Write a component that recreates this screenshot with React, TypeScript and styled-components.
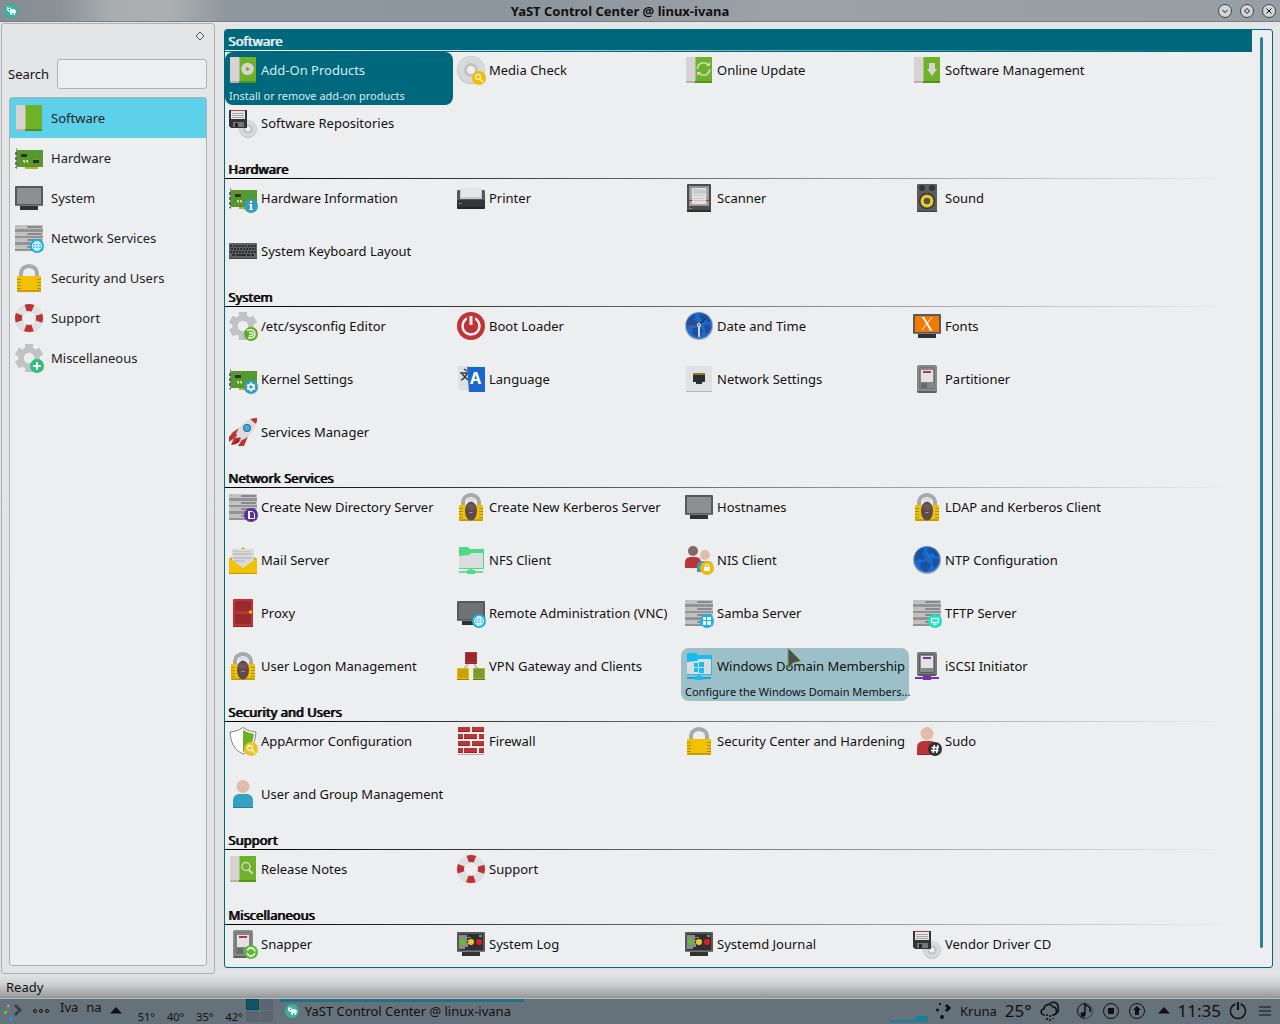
import React from "react";
import styled, { createGlobalStyle, css } from "styled-components";

const GlobalStyle = createGlobalStyle`
  *, *::before, *::after { box-sizing: border-box; }
  body {
    margin: 0;
    background: #e4e5e7;
    color: #111;
    font: 13px/18px "Noto Sans", "Open Sans", sans-serif;
  }
  button, input { font: inherit; color: inherit; }
  h1, h2, p { margin: 0; font-size: inherit; }
`;

/* ---------- icons, all drawn on a 28 x 28 grid ---------- */

const Glyph = styled.svg`
  display: block;
  flex: none;
  overflow: visible;
`;

const Book = () => (
  <>
    <path fill="#d9d2d2" d="M1 1h10v24H1z" />
    <path fill="#beb0b1" d="M1 25h10v2H1z" />
    <path fill="#6eb327" d="M10 1h17v24H10z" />
    <path fill="#9cc873" d="M10 1h1v24h-1z" />
    <path fill="#558f1b" d="M10 25h17v2H10z" />
  </>
);

const Board = () => (
  <>
    <path stroke="#8f9396" strokeWidth="1" d="M1.500 4v21" />
    <path stroke="#444d63" strokeWidth="1.500" strokeDasharray="3 2" d="M1 8v16" />
    <path fill="#55992c" d="M2 6h26v17H2z" />
    <path fill="#b5ad36" d="M10 23h13v2H10z" />
    <path fill="#6b8a22" d="M10 22h13v1H10z" />
    <path fill="#2d332b" d="M6 10h6v3H6zM18 16h6v3h-6z" />
    <path fill="#7c902a" d="M6 9h6v1H6zM18 15h6v1h-6z" />
    <path fill="#e2cfa2" d="M8 16h2v2H8zM11 16h2v2h-2zM9 18h1v1H9zM12 18h1v1h-1z" />
    <path fill="#2c9bb0" d="M20 8h3l-1 3z" />
  </>
);

const Screen = ({ fill = "#8e8f91" }: { fill?: string }) => (
  <>
    <path fill="#303133" d="M5 22h18v4H5z" />
    <rect x="0" y="2" width="28" height="20" rx="1" fill="#58595b" />
    <path fill={fill} d="M2 4h24v16H2z" />
    <path fill="#77797b" d="M0 21h28v1H0z" />
  </>
);

const Rack = () => (
  <>
    <path fill="#929395" d="M0 1h28v26H0z" />
    {[1, 8, 14, 21].map((y) => (
      <g key={y}>
        <path fill="#c1c2c4" d={`M0 ${y}h28v4H0z`} />
        <rect x="12" y={y + 1} width="15" height="2" rx="1" fill="#88898b" />
        <path fill="#d49a94" d={`M2 ${y + 1}h1v1h-1z`} />
        <path fill="#c9bb5d" d={`M4 ${y + 1}h1v1h-1z`} />
      </g>
    ))}
  </>
);

const Padlock = () => (
  <>
    <path fill="none" stroke="#a8a9ab" strokeWidth="4" d="M6 14V9a8 7 0 0 1 16 0v5" />
    <path fill="#f2c100" d="M2 12h24v15a1 1 0 0 1-1 1H3a1 1 0 0 1-1-1z" />
    <path fill="#a98d12" d="M2 15h4v1H2zM22 15h4v1h-4zM2 18h4v1H2zM22 18h4v1h-4zM2 21h4v1H2zM22 21h4v1h-4zM2 24h4v1H2zM22 24h4v1h-4z" />
    <path fill="#c79d06" d="M2 26h24v1l-1 1H3l-1-1z" />
  </>
);

const KerberosLock = () => (
  <>
    <Padlock />
    <ellipse cx="14" cy="18" rx="6" ry="9.500" fill="#5d4b4e" />
    <path fill="#dcdddf" d="M9 10c0-7 10-7 10 0-2-3-8-3-10 0z" />
    <ellipse cx="14" cy="14" rx="4" ry="3" fill="#6c595b" />
    <path stroke="#a9999b" strokeWidth="1" d="M12.500 19.500h3" />
  </>
);

const Cog = () => (
  <g stroke="#c1c2c4" fill="none">
    <circle cx="14" cy="14" r="8" strokeWidth="5.500" />
    {[0, 60, 120, 180, 240, 300].map((a) => (
      <path key={a} strokeWidth="8" d="M14 0v6" transform={`rotate(${a} 14 14)`} />
    ))}
  </g>
);

const Lifebuoy = () => (
  <g fill="none" strokeWidth="7">
    <circle cx="14" cy="14.500" r="10.500" stroke="#cbccce" />
    <circle cx="14" cy="14" r="10.500" stroke="#dfe0e2" />
    <circle cx="14" cy="14" r="10.500" stroke="#be3436" strokeDasharray="7.400 9.093" strokeDashoffset="3.700" />
  </g>
);

const Disc = ({ cx = 14, cy = 14, r = 14 }: { cx?: number; cy?: number; r?: number }) => (
  <>
    <circle cx={cx} cy={cy} r={r} fill="#bfc0c2" />
    <circle cx={cx} cy={cy - 0.5} r={r - 0.5} fill="#d8d9db" />
    <circle cx={cx} cy={cy} r={r * 0.5} fill="#c0c1c3" />
    <circle cx={cx} cy={cy} r={r * 0.28} fill="#eeeff1" />
  </>
);

const Floppy = () => (
  <>
    <Disc cx={19} cy={20} r={9} />
    <path fill="#333436" d="M0 1h18v18H2l-2-2z" />
    <path fill="#c5383a" d="M2 1h14v1H2z" />
    <path fill="#e8e8ea" d="M2 2h14v8H2z" />
    <path fill="#a4a5a7" d="M3 4h12v1H3zM3 6h12v1H3zM3 8h12v1H3z" />
    <path fill="#747577" d="M4 13h11v5H4z" />
    <path fill="#28292b" d="M6 14h3v4H6z" />
  </>
);

const Globe = () => (
  <>
    <circle cx="14" cy="14" r="14" fill="#a3a7ad" />
    <circle cx="14" cy="13.500" r="13" fill="#1b6ad0" />
    <path fill="#1d519c" d="M4 6l5-4 2 2-2 4 4 2-2 4-5-1-4 2 0-5zM15 2l6 1 5 6-3 2-3-4-4 1-2-4zM8 16l5-1 5 3-2 5-3 3-6-5zM19 13l5-1 2 4-4 6-2-3z" />
  </>
);

const Drive = () => (
  <>
    <rect x="4" y="0" width="20" height="28" rx="2" fill="#88898b" />
    <path fill="#5f6062" d="M4 26h20a2 2 0 0 1-2 2H6a2 2 0 0 1-2-2z" />
    <rect x="6.500" y="2.500" width="15" height="21" rx="1.500" fill="#858688" stroke="#727375" />
    <path fill="#e2e2e4" d="M8 5h12v12H8z" />
    <path fill="#bd3538" d="M10 6h8v2h-8z" />
    <path fill="#6a6b6d" d="M8 18h6v5H8z" />
  </>
);

const Person = ({ shirt, shade }: { shirt: string; shade: string }) => (
  <>
    <circle cx="14" cy="6.500" r="6.500" fill="#dfbda8" />
    <path fill={shirt} d="M4 28v-7c0-5 3-7 7-7h6c4 0 7 2 7 7v7z" />
    <path fill={shade} d="M4 27h20v1H4z" />
  </>
);

const NetFolder = ({ hue, shade }: { hue: string; shade: string }) => (
  <>
    <path fill={hue} d="M2 1h9l2 2h14v7H2z" />
    <path fill="#dbdcde" d="M2 10l10-1 2-2h12v15H2z" />
    <path fill={hue} d="M2 22h25v1H2zM26 6h1v17h-1z" />
    <path fill={shade} d="M2 25h24v2H2z" />
    <path fill={hue} d="M13 23h2v1h3v4h-8v-4h3z" />
  </>
);

const LogScreen = () => (
  <>
    <Screen fill="#2e3032" />
    <path fill="#8a8b8d" d="M2 5h8v2H2zM2 7h12v1H2zM2 8h8v2H2zM2 10h15v1H2zM2 11h8v2H2zM2 13h14v1H2zM2 14h9v3H2zM2 17h6v2H2z" />
    <path fill="#6f9a5c" d="M22 5h3v2h-3z" />
    <circle cx="5.500" cy="12" r="3" fill="#67bb36" />
    <circle cx="14" cy="12" r="3" fill="#ecc52b" />
    <circle cx="22" cy="12" r="3" fill="#de1c24" />
  </>
);

const Badge = ({ fill, children }: { fill: string; children?: React.ReactNode }) => (
  <>
    <circle cx="22" cy="22" r="7" fill={fill} />
    {children}
  </>
);

const LensBadge = ({ fill = "#f3bd05" }: { fill?: string }) => (
  <Badge fill={fill}>
    <circle cx="21" cy="21" r="2.500" fill="none" stroke="#fff3cf" strokeWidth="1.300" />
    <path stroke="#fff3cf" strokeWidth="1.500" d="M23 23l3 3" />
  </Badge>
);

const WebBadge = () => (
  <Badge fill="#16b4e2">
    <g fill="none" stroke="#fff">
      <circle cx="22" cy="22" r="4.500" />
      <ellipse cx="22" cy="22" rx="2" ry="4.500" />
      <path d="M17.500 22h9M22 17.500v9M18.500 19.500h7M18.500 24.500h7" strokeWidth=".7" />
    </g>
  </Badge>
);

const Brick = ({ x, y, w, c, s }: { x: number; y: number; w: number; c: string; s: string }) => (
  <>
    <path fill={s} d={`M${x} ${y}h${w}v12h-${w}z`} />
    <path fill={c} d={`M${x + 1} ${y + 1}h${w - 2}v9h-${w - 2}z`} />
  </>
);

const drawings = {
  software: <Book />,
  hardware: <Board />,
  system: <Screen />,
  network: <><Rack /><WebBadge /></>,
  lock: <Padlock />,
  support: <Lifebuoy />,
  misc: (
    <>
      <Cog />
      <Badge fill="#2dc079"><path stroke="#fff" strokeWidth="2" d="M22 18v8M18 22h8" /></Badge>
    </>
  ),
  addon: (
    <>
      <Book />
      <circle cx="18.500" cy="13" r="4" fill="none" stroke="#d9d2d2" strokeWidth="4.500" />
    </>
  ),
  media: <><Disc /><LensBadge /></>,
  update: (
    <>
      <Book />
      <g fill="none" stroke="#d9d2d2" strokeWidth="1.600">
        <path d="M12.500 13a6 6 0 0 1 11-3.500M24.500 13a6 6 0 0 1-11 3.500" />
      </g>
      <path fill="#d9d2d2" d="M21 10h4V6zM16 16h-4v4z" />
    </>
  ),
  install: <><Book /><path fill="#d9d2d2" d="M16 7h6v6h2l-5 7-5-7h2z" /></>,
  floppy: <Floppy />,
  hwinfo: (
    <>
      <Board />
      <Badge fill="#359dbe">
        <path fill="#fff" d="M21 17h2v2h-2zM20 20h3v5h1v1h-4v-1h1v-4h-1z" />
      </Badge>
    </>
  ),
  printer: (
    <>
      <path fill="#55575a" d="M0 7l1-1h26l1 1v17l-1 1H1l-1-1z" />
      <path fill="#333538" d="M0 16h28v8l-1 1H1l-1-1z" />
      <path fill="#232426" d="M0 23h28v1l-1 1H1z" />
      <path fill="#c9cacc" d="M3 5h22v10H3z" />
      <path fill="#e5e6e8" d="M4 3h20v10H4z" />
      <path fill="#988744" d="M2 19h3v1H2z" />
    </>
  ),
  scanner: (
    <>
      <rect x="2" y="0" width="24" height="28" rx="1" fill="#4b4c4e" />
      <path fill="#303133" d="M2 26h24v2H2z" />
      <path fill="#929395" d="M4 2h20v20H4z" />
      <path fill="#a6a7a9" d="M5 4h18v17H5z" />
      <path fill="#dfe0e2" d="M7 4h14v16H7z" />
      <path fill="#c9cacc" d="M8 5h10v1h3v4H8zM8 11h11v1h-11zM8 14h11v1H8z" />
      <path fill="#e9b0b0" d="M7 16h14v1H7z" />
      <path fill="#c9282c" d="M4 16h3v1H4zM21 16h3v1h-3z" />
      <path fill="#9a9123" d="M4 24h3v1H4z" />
    </>
  ),
  sound: (
    <>
      <rect x="4" y="0" width="20" height="28" rx="1" fill="#5b5c5e" />
      <path fill="#3d3e40" d="M4 27h20v1H4z" />
      <circle cx="9" cy="4" r="3" fill="#333436" />
      <circle cx="19" cy="4" r="3" fill="#333436" />
      <circle cx="14" cy="17" r="8" fill="#303133" />
      <circle cx="14" cy="17" r="4.800" fill="none" stroke="#e8c52a" strokeWidth="3.500" />
      <circle cx="14" cy="17" r="2.500" fill="#55565a" />
    </>
  ),
  keyboard: (
    <>
      <rect x="0" y="6" width="28" height="16" rx="1" fill="#5f6164" />
      <path fill="#434548" d="M0 21h28v1H0z" />
      <g stroke="#2c2e31" strokeWidth="2">
        <path strokeDasharray="2 1" d="M1 9h26M2 12h25M1 15h26" />
        <path strokeDasharray="3 1 10 1 3 1 3" d="M3 18h22" />
      </g>
    </>
  ),
  sysconfig: (
    <>
      <Cog />
      <Badge fill="#5cad2a">
        <path fill="none" stroke="#e8f4dd" strokeWidth="1.500" d="M18 18.500c5-2 8 0 8 3.500s-4 5-7 3.500M20 21c3-1 4 0 4 1s-2 2-4 1.500" />
      </Badge>
    </>
  ),
  boot: (
    <>
      <circle cx="14" cy="14" r="14" fill="#bf3436" />
      <circle cx="14" cy="14" r="8.500" fill="none" stroke="#f0f0f2" strokeWidth="2.500" />
      <path fill="#bf3436" d="M10 3h8v8h-8z" />
      <path fill="#f0f0f2" d="M12.500 4h3v9h-3z" />
    </>
  ),
  clock: (
    <>
      <Globe />
      <path stroke="#b42d40" strokeWidth="1" d="M3 13.500h10" />
      <path stroke="#22242a" strokeWidth="1.500" d="M14 13l6-6" />
      <path stroke="#c8d4e4" strokeWidth="2" d="M14 14v11" />
      <circle cx="14" cy="13" r="2" fill="#eee" />
      <circle cx="14" cy="13" r="1" fill="#555" />
    </>
  ),
  fonts: (
    <>
      <Screen fill="#f57900" />
      <path stroke="#fff" strokeWidth="2" d="M10 5l8 13" />
      <path stroke="#fff" strokeWidth="1" d="M19 5L9 18M8.500 5.500h3M16.500 18h3" />
    </>
  ),
  kernel: (
    <>
      <Board />
      <Badge fill="#359dbe">
        <circle cx="22" cy="22" r="2.700" fill="none" stroke="#fff" strokeWidth="1.800" />
        <path stroke="#fff" strokeWidth="1.800" d="M22 17.500v2M22 24.500v2M18 20l2 1M24 23l2 1M26 20l-2 1M20 23l-2 1" />
      </Badge>
    </>
  ),
  language: (
    <>
      <path fill="#dedfe1" d="M1 1h17l2 24H1z" />
      <path fill="none" stroke="#3a3b3d" strokeWidth="1.500" d="M7 4l3 2M3 8h8M10 8c-1 3-3 6-6 7M5 9l6 6" />
      <path fill="#1a68cf" d="M10 2h18v25H12z" />
      <text x="13" y="19" fill="#fff" fontFamily="Noto Sans, sans-serif" fontWeight="700" fontSize="16">A</text>
    </>
  ),
  port: (
    <>
      <rect x="1" y="1" width="26" height="26" rx="1" fill="#e0e1e3" />
      <path fill="#b4b5b7" d="M1 26h26v1H1z" />
      <path fill="#2d2e30" d="M8 8h12v9h-3v2h-6v-2H8z" />
      <path fill="#8c7b1e" d="M8 8h12v2H8z" />
    </>
  ),
  drive: <Drive />,
  rocket: (
    <>
      <path fill="#be3436" d="M10 10l-6 4-4 5v5l8-6zM19 18l-4 10H9l5-8zM2 27l3-7 8-1-4 6z" />
      <path fill="#8f2a2c" d="M2 27l7-6 2 2-4 3z" />
      <path fill="#dcdde0" d="M28 0c-1 9-5 17-14 22l-7-6C10 8 17 1 28 0z" />
      <path fill="#be3436" d="M28 0c0 2 0 4-1 6l-6-5c2 0 5-1 7-1z" />
      <circle cx="18" cy="10" r="4" fill="#55606a" />
      <circle cx="18" cy="10" r="3" fill="#1cb9ee" />
    </>
  ),
  directory: (
    <>
      <Rack />
      <Badge fill="#5b2da0">
        <path fill="none" stroke="#fff" d="M20.500 18.500h3l2 2v5h-5z" />
        <path fill="#fff" d="M19 18h2v8h-2z" />
      </Badge>
    </>
  ),
  kerberos: <KerberosLock />,
  mail: (
    <>
      <path fill="#d0a400" d="M12 3l2-2 2 2zM0 13l3-2h22l3 2v14H0z" />
      <path fill="#d9dadc" d="M3 3h22v14l-11 8-11-8z" />
      <path fill="#c3c4c6" d="M4 5h17v1H4zM4 7h19v2H4zM4 11h19v2H4zM4 14h12v2H4z" />
      <path fill="#f2c100" d="M0 12l14 10 14-10v15H0z" />
      <path fill="#c49a05" d="M0 27h28v1H0z" />
    </>
  ),
  nfs: <NetFolder hue="#4bdb83" shade="#74d69b" />,
  nis: (
    <>
      <circle cx="8" cy="5" r="5" fill="#87666a" />
      <path fill="#be3436" d="M0 22v-5c0-4 2-6 6-6h4c4 0 6 2 6 6v5z" />
      <circle cx="20" cy="9" r="5" fill="#dfbda8" />
      <path fill="#359dbe" d="M12 26v-5c0-4 2-6 6-6h4c4 0 6 2 6 6v5z" />
      <Badge fill="#f2b90a">
        <path fill="none" stroke="#fff" d="M20.500 21v-2.500h3V21" />
        <path fill="#fff" d="M19 21h6v4h-6z" />
      </Badge>
    </>
  ),
  globe: <Globe />,
  door: (
    <>
      <rect x="4" y="0" width="20" height="28" rx="1" fill="#be3436" />
      <path fill="#8f2628" d="M4 27h20v1H4z" />
      <path fill="#982a2c" d="M6 2h16v10H6zM6 15h16v10H6z" />
      <circle cx="21.500" cy="13" r="1.700" fill="#f2c100" />
    </>
  ),
  vnc: <><Screen fill="#707173" /><WebBadge /></>,
  samba: (
    <>
      <Rack />
      <Badge fill="#16b4ef">
        <path fill="#fff" d="M18 18h3v3h-3zM22 18h4v3h-4zM18 22h3v4h-3zM22 22h4v4h-4z" />
      </Badge>
    </>
  ),
  tftp: (
    <>
      <Rack />
      <Badge fill="#0ee6bd">
        <path fill="none" stroke="#fff" strokeWidth="1.300" d="M18.500 19.500h7v4h-7zM20.500 25.500h3" />
      </Badge>
    </>
  ),
  vpn: (
    <>
      <path stroke="#b8b9bb" strokeWidth="2" d="M11 12l-4 5M17 12l4 5" />
      <Brick x={8} y={0} w={12} c="#98292b" s="#be3436" />
      <Brick x={0} y={16} w={12} c="#caa307" s="#ecbd04" />
      <Brick x={16} y={16} w={12} c="#7f9a29" s="#9cb832" />
      <path fill="#8f2628" d="M8 11h12v1H8z" />
      <path fill="#9d7d05" d="M0 27h12v1H0z" />
      <path fill="#62781e" d="M16 27h12v1H16z" />
    </>
  ),
  domain: (
    <>
      <NetFolder hue="#17bcf0" shade="#2a9fcb" />
      <path fill="#17bcf0" d="M9 11h4v4H9zM14 10h5v5h-5zM9 16h4v4H9zM14 16h5v5h-5z" />
    </>
  ),
  iscsi: (
    <>
      <rect x="4" y="0" width="20" height="24" rx="2" fill="#78797b" />
      <path fill="#58595b" d="M4 22h20l-2 2H6z" />
      <rect x="6.500" y="2.500" width="15" height="18" rx="1.500" fill="#88898b" stroke="#5c5d5f" />
      <path fill="#e2e2e4" d="M8 4h12v12H8z" />
      <path fill="#6b35b5" d="M10 5h8v2h-8zM2 25h24v2H2zM10 24h8v4h-8z" />
    </>
  ),
  apparmor: (
    <>
      <path fill="#fff" stroke="#808183" d="M14 .500c4 3 8 4 13 4.500-1 11-4 18-13 22C5 23 2 16 1 5 6 4.500 10 3.500 14 .500z" />
      <path fill="#6cb024" d="M14 3c3 2 7 3 11 4-1 8-4 15-11 18z" />
      <LensBadge fill="#e8c52a" />
    </>
  ),
  firewall: (
    <>
      <path fill="#be3436" d="M1 0h12v4H1zM15 0h12v4H15zM1 7h5v4H1zM7 7h13v4H7zM22 7h5v4h-5zM1 14h12v4H1zM15 14h12v4H15zM1 21h5v4H1zM7 21h13v4H7zM22 21h5v4h-5z" />
      <path fill="#8f2628" d="M1 4h12v1H1zM15 4h12v1H15zM1 11h5v1H1zM7 11h13v1H7zM22 11h5v1h-5zM1 18h12v1H1zM15 18h12v1H15zM1 25h5v1H1zM7 25h13v1H7zM22 25h5v1h-5z" />
      <path fill="#c9a3a5" d="M1 27h26v1H1z" />
    </>
  ),
  sudo: (
    <>
      <Person shirt="#be3436" shade="#8f2628" />
      <Badge fill="#303032">
        <path stroke="#fff" strokeWidth="1.500" d="M21.500 18l-1.500 8M25 18l-1.500 8M18.500 20.500h7.500M18 23.500h7.500" />
      </Badge>
    </>
  ),
  user: <Person shirt="#35a0c2" shade="#28809c" />,
  notes: (
    <>
      <Book />
      <circle cx="17" cy="11.500" r="4" fill="none" stroke="#d9d2d2" strokeWidth="1.500" />
      <path stroke="#d9d2d2" strokeWidth="2" d="M19.500 14.500l4 4" />
    </>
  ),
  snapper: (
    <>
      <Drive />
      <Badge fill="#5fb836">
        <circle cx="22" cy="22" r="4" fill="none" stroke="#fff" strokeWidth="1.500" strokeDasharray="10 2.500" transform="rotate(20 22 22)" />
      </Badge>
    </>
  ),
  log: <LogScreen />,
};

type IconName = keyof typeof drawings;

const Icon = ({ name }: { name: IconName }) => (
  <Glyph width="28" height="28" viewBox="0 0 28 28" aria-hidden="true">
    {drawings[name]}
  </Glyph>
);

/* ---------- window frame ---------- */

const Desktop = styled.div`
  display: flex;
  flex-direction: column;
  height: 100vh;
`;

const TitleBar = styled.header`
  display: flex;
  align-items: center;
  flex: none;
  height: 22px;
  padding: 0 4px;
  border-bottom: 1px solid #787e84;
  background: linear-gradient(90deg, #858d94 0, #8a9298 60px, #a9adb0 110px, #abafb1 170px, #8f979e 225px, #8d969d 42%, #9ba2a7 60%, #989fa4 100%);
`;

const TitleIcon = styled.div`
  width: 18px;
`;

const Title = styled.h1`
  flex: 1;
  text-align: center;
  font-weight: 700;
  line-height: 20px;
`;

const WindowButtons = styled.div`
  display: flex;
  gap: 8px;
`;

const WindowButton = styled.button`
  display: grid;
  place-items: center;
  width: 14px;
  height: 14px;
  padding: 0;
  border: 1px solid #3e4347;
  border-radius: 50%;
  background: #d3d6d8;
`;

const Work = styled.main`
  flex: 1;
  min-height: 0;
  display: flex;
  flex-direction: column;
  background: linear-gradient(180deg, #e4e5e7 0, #e2e3e5 calc(100% - 24px), #cfd0d1 calc(100% - 14px), #a2a3a4 calc(100% - 3px), #929494 100%);
`;

const Panels = styled.div`
  flex: 1;
  min-height: 0;
  display: flex;
  padding: 1px 7px 0 1px;
  gap: 9px;
`;

const Side = styled.aside`
  flex: none;
  width: 214px;
  display: flex;
  flex-direction: column;
  padding: 5px 7px 7px;
  border: 1px solid #aeb0b2;
  border-radius: 3px;
`;

const FloatButton = styled.button`
  align-self: flex-end;
  width: 14px;
  height: 14px;
  padding: 0;
  border: 0;
  background: none;
`;

const SearchRow = styled.div`
  display: flex;
  align-items: center;
  gap: 8px;
  margin: 16px 0 8px;

  label { margin-left: -1px; }

  input {
    flex: 1;
    min-width: 0;
    height: 30px;
    padding: 0 6px;
    border: 1px solid #aeb0b2;
    border-radius: 3px;
    background: #edeef0;
    outline: none;
  }
`;

const Groups = styled.nav`
  flex: 1;
  border: 1px solid #aeb0b2;
  border-radius: 3px;
  background: #edeef0;
`;

const Group = styled.button<{ $active?: boolean }>`
  display: flex;
  align-items: center;
  gap: 8px;
  width: 100%;
  height: 40px;
  padding: 0 5px;
  border: 0;
  background: ${(p) => (p.$active ? "#5dd1ea" : "transparent")};
  color: #222;
  text-align: left;
`;

const Main = styled.div`
  flex: 1;
  min-width: 0;
  display: flex;
  margin: 6px 0;
  border: 1px solid #00687c;
  border-radius: 3px;
  background: #edeef0;
  overflow: hidden;
`;

const Sections = styled.div`
  flex: 1;
  min-width: 0;
`;

const Gutter = styled.div`
  flex: none;
  width: 20px;
  padding: 7px 8px 19px;

  &::before {
    content: "";
    display: block;
    width: 3px;
    height: 100%;
    border-radius: 2px;
    background: #2b8498;
  }
`;

const Heading = styled.h2<{ $active?: boolean }>`
  height: 22px;
  padding: 2px 3px 0;
  font-weight: 400;
  color: #000;
  text-shadow: 1px 0 currentColor;
  background: linear-gradient(90deg, #000, #0000 98%) 0 20px / 100% 1px no-repeat;
  ${(p) =>
    p.$active &&
    css`
      color: #e6f0f2;
      background: linear-gradient(90deg, #fff, #fff0 98%) 0 20px / 100% 1px no-repeat #00687c;
    `}
`;

const Tiles = styled.div`
  display: grid;
  grid-template-columns: repeat(auto-fill, 228px);
`;

const Tile = styled.button<{ $state?: "selected" | "hover" }>`
  position: relative;
  display: flex;
  flex-direction: column;
  justify-content: flex-start;
  align-items: flex-start;
  height: 53px;
  padding: 4px 0 0 4px;
  border: 0;
  border-radius: 8px;
  background: none;
  text-align: left;
  white-space: nowrap;
  ${(p) => p.$state === "selected" && css`background: #00687c; color: #d8eaee;`}
  ${(p) => p.$state === "hover" && css`background: #9bc0c8;`}
`;

const TileTop = styled.span`
  display: flex;
  align-items: center;
  gap: 4px;
  height: 28px;
`;

const Hint = styled.span`
  font-size: 11px;
  line-height: 24px;
`;

const Pointer = styled.svg`
  position: absolute;
  top: -1px;
  left: 106px;
`;

const Status = styled.footer`
  flex: none;
  height: 24px;
  padding: 4px 6px;
`;

/* ---------- desktop taskbar ---------- */

const Bar = styled.footer`
  flex: none;
  display: flex;
  align-items: center;
  height: 26px;
  border-top: 1px solid #b4b9bc;
  background: #65727b;
  white-space: nowrap;
  padding: 0 9px 2px 3px;
`;

const User = styled.span`
  display: flex;
  gap: 8px;
  margin: 0 8px 8px 11px;
`;

const Temps = styled.span`
  display: flex;
  gap: 12px;
  margin: 12px 3px 0 16px;
  font-size: 11px;
  line-height: 16px;
`;

const Pager = styled.div`
  display: grid;
  grid-template: repeat(2, 11px) / repeat(2, 13px);
  gap: 1px;
  align-self: flex-start;

  i { background: #5a666f; }
  i:first-child { background: #0f5666; border: 1px solid #0a4552; }
`;

const Task = styled.button`
  display: flex;
  align-items: center;
  gap: 6px;
  align-self: stretch;
  width: 244px;
  margin-left: 7px;
  padding: 0 5px 2px;
  border: 0;
  border-top: 3px solid #207083;
  background: none;
`;

const Tray = styled.div`
  display: flex;
  align-items: center;
  gap: 8px;
  margin-left: auto;
`;

const Big = styled.span`
  font-size: 17px;
  line-height: 24px;
`;

const TrayButton = styled.button<{ $space?: number }>`
  display: block;
  padding: 0;
  border: 0;
  margin: 0 0 0 ${(p) => p.$space ?? 0}px;
  background: none;
`;

const Line = styled.svg.attrs({ fill: "none" })`
  display: block;
  overflow: visible;
  stroke: #111;
`;

const YastMark = () => (
  <Glyph width="14" height="14" viewBox="0 0 14 14" aria-hidden="true">
    <circle cx="7" cy="7" r="7" fill="#35b2a2" />
    <path fill="#f2f5f5" d="M3 2.500l2 2 1-2 1 2.500h3l2 1.500v3l-1-1v2.500h-1.500V9H8v2H6.500L6 8 4 7.500 3 6z" />
    <path fill="#2d4a4a" d="M5 5h1v1H5z" />
  </Glyph>
);

const Caret = () => (
  <Line width="12" height="7" viewBox="0 0 12 7"><path fill="#111" stroke="none" d="M0 6.500L6 0l6 6.500z" /></Line>
);

/* ---------- data ---------- */

const groups: [IconName, string][] = [
  ["software", "Software"],
  ["hardware", "Hardware"],
  ["system", "System"],
  ["network", "Network Services"],
  ["lock", "Security and Users"],
  ["support", "Support"],
  ["misc", "Miscellaneous"],
];

type Entry = { icon: IconName; name: string; hint?: string; state?: "selected" | "hover" };

const sections: { title: string; entries: Entry[] }[] = [
  {
    title: "Software",
    entries: [
      { icon: "addon", name: "Add-On Products", hint: "Install or remove add-on products", state: "selected" },
      { icon: "media", name: "Media Check" },
      { icon: "update", name: "Online Update" },
      { icon: "install", name: "Software Management" },
      { icon: "floppy", name: "Software Repositories" },
    ],
  },
  {
    title: "Hardware",
    entries: [
      { icon: "hwinfo", name: "Hardware Information" },
      { icon: "printer", name: "Printer" },
      { icon: "scanner", name: "Scanner" },
      { icon: "sound", name: "Sound" },
      { icon: "keyboard", name: "System Keyboard Layout" },
    ],
  },
  {
    title: "System",
    entries: [
      { icon: "sysconfig", name: "/etc/sysconfig Editor" },
      { icon: "boot", name: "Boot Loader" },
      { icon: "clock", name: "Date and Time" },
      { icon: "fonts", name: "Fonts" },
      { icon: "kernel", name: "Kernel Settings" },
      { icon: "language", name: "Language" },
      { icon: "port", name: "Network Settings" },
      { icon: "drive", name: "Partitioner" },
      { icon: "rocket", name: "Services Manager" },
    ],
  },
  {
    title: "Network Services",
    entries: [
      { icon: "directory", name: "Create New Directory Server" },
      { icon: "kerberos", name: "Create New Kerberos Server" },
      { icon: "system", name: "Hostnames" },
      { icon: "kerberos", name: "LDAP and Kerberos Client" },
      { icon: "mail", name: "Mail Server" },
      { icon: "nfs", name: "NFS Client" },
      { icon: "nis", name: "NIS Client" },
      { icon: "globe", name: "NTP Configuration" },
      { icon: "door", name: "Proxy" },
      { icon: "vnc", name: "Remote Administration (VNC)" },
      { icon: "samba", name: "Samba Server" },
      { icon: "tftp", name: "TFTP Server" },
      { icon: "kerberos", name: "User Logon Management" },
      { icon: "vpn", name: "VPN Gateway and Clients" },
      { icon: "domain", name: "Windows Domain Membership", hint: "Configure the Windows Domain Members...", state: "hover" },
      { icon: "iscsi", name: "iSCSI Initiator" },
    ],
  },
  {
    title: "Security and Users",
    entries: [
      { icon: "apparmor", name: "AppArmor Configuration" },
      { icon: "firewall", name: "Firewall" },
      { icon: "lock", name: "Security Center and Hardening" },
      { icon: "sudo", name: "Sudo" },
      { icon: "user", name: "User and Group Management" },
    ],
  },
  {
    title: "Support",
    entries: [
      { icon: "notes", name: "Release Notes" },
      { icon: "support", name: "Support" },
    ],
  },
  {
    title: "Miscellaneous",
    entries: [
      { icon: "snapper", name: "Snapper" },
      { icon: "log", name: "System Log" },
      { icon: "log", name: "Systemd Journal" },
      { icon: "floppy", name: "Vendor Driver CD" },
    ],
  },
];

const temperatures = ["51°", "40°", "35°", "42°"];

export default function App() {
  return (
    <Desktop>
      <GlobalStyle />
      <TitleBar>
        <TitleIcon><YastMark /></TitleIcon>
        <Title>YaST Control Center @ linux-ivana</Title>
        <WindowButtons>
          <WindowButton aria-label="Minimize">
            <Line width="8" height="8" viewBox="0 0 8 8"><path d="M1.500 3L4 5.500 6.500 3" /></Line>
          </WindowButton>
          <WindowButton aria-label="Maximize">
            <Line width="8" height="8" viewBox="0 0 8 8"><path d="M4 1.500L6.500 4 4 6.500 1.500 4z" /></Line>
          </WindowButton>
          <WindowButton aria-label="Close">
            <Line width="8" height="8" viewBox="0 0 8 8"><path d="M1.500 1.500l5 5M6.500 1.500l-5 5" /></Line>
          </WindowButton>
        </WindowButtons>
      </TitleBar>

      <Work>
        <Panels>
          <Side>
            <FloatButton aria-label="Detach panel">
              <Line width="14" height="14" viewBox="0 0 14 14">
                <path stroke="#55585b" d="M7 3l4 4-4 4-4-4z" />
              </Line>
            </FloatButton>
            <SearchRow>
              <label htmlFor="search">Search</label>
              <input id="search" type="text" />
            </SearchRow>
            <Groups>
              {groups.map(([icon, label], i) => (
                <Group key={label} $active={i === 0}>
                  <Icon name={icon} />
                  {label}
                </Group>
              ))}
            </Groups>
          </Side>

          <Main>
            <Sections>
              {sections.map((s, i) => (
                <section key={s.title}>
                  <Heading $active={i === 0}>{s.title}</Heading>
                  <Tiles>
                    {s.entries.map((e) => (
                      <Tile key={e.name} $state={e.state}>
                        <TileTop>
                          <Icon name={e.icon} />
                          {e.name}
                        </TileTop>
                        {e.hint && <Hint>{e.hint}</Hint>}
                        {e.state === "hover" && (
                          <Pointer width="16" height="24" viewBox="0 0 16 24" aria-hidden="true">
                            <path fill="#4b4f4c" stroke="#7fae62" d="M1 1v21l5-6 8-2z" />
                          </Pointer>
                        )}
                      </Tile>
                    ))}
                  </Tiles>
                </section>
              ))}
            </Sections>
            <Gutter />
          </Main>
        </Panels>
        <Status>Ready</Status>
      </Work>

      <Bar>
        <TrayButton aria-label="Application launcher">
          <Line width="20" height="20" viewBox="0 0 20 20">
            <path stroke="#3a4146" strokeWidth="3" d="M12 4l5 5-5 5" />
            <path fill="#e59a86" stroke="none" d="M5 3l2 3H4z" />
            <path fill="#68c21c" stroke="none" d="M1 10h3v3H1z" />
            <circle cx="8" cy="18" r="2" fill="#2490ff" stroke="none" />
          </Line>
        </TrayButton>
        <TrayButton aria-label="Activities" $space={10}>
          <Line width="16" height="6" viewBox="0 0 16 6">
            <circle cx="2" cy="3" r="1.500" /><circle cx="8" cy="3" r="1.500" /><circle cx="14" cy="3" r="1.500" />
          </Line>
        </TrayButton>
        <User><span>Iva</span><span>na</span></User>
        <Caret />
        <Temps>{temperatures.map((t) => <span key={t}>{t}</span>)}</Temps>
        <Pager><i /><i /><i /><i /></Pager>
        <Task><YastMark />YaST Control Center @ linux-ivana</Task>

        <Tray>
          <Line width="38" height="22" viewBox="0 0 38 22">
            <path fill="#1d7f93" stroke="none" d="M0 20h13v2H0zM13 20h12v2H13zM25 16h13v6H25z" />
          </Line>
          <Line width="16" height="16" viewBox="0 0 16 16">
            <path strokeWidth="3" d="M10 2l3 3-3 3" />
            <path fill="#111" stroke="none" d="M3 0h2v2H3z" />
            <circle cx="1.500" cy="7" r="1.500" fill="#111" stroke="none" />
            <circle cx="6" cy="14" r="2" fill="#111" stroke="none" />
          </Line>
          <span>Kruna</span>
          <Big>25°</Big>
          <Line width="20" height="20" viewBox="0 0 20 20">
            <path strokeWidth="1.600" d="M5 14c-5 0-5-6-1-6 0-5 7-6 9-2 4 0 5 6 1 8M9 3.500c3-4 10-2 9 3 1 3 1 5-3 6.500" />
            <path strokeWidth="1.600" strokeDasharray="2 2" d="M7 13v6M10 14v6M13 13v5" />
          </Line>
          <TrayButton aria-label="Media player" $space={8}>
            <Line width="18" height="18" viewBox="0 0 18 18">
              <path d="M9 1.500a7.500 7.500 0 0 0 0 15" />
              <path stroke="#38424a" d="M9 1.500a7.500 7.500 0 0 1 0 15" />
              <path strokeWidth="1.500" d="M9 12V2l5 4v4" />
              <circle cx="7" cy="12.500" r="2.500" fill="#111" stroke="none" />
            </Line>
          </TrayButton>
          <TrayButton aria-label="Stop">
            <Line width="18" height="18" viewBox="0 0 18 18">
              <circle cx="9" cy="9" r="7.500" /><path fill="#111" stroke="none" d="M6 6h6v6H6z" />
            </Line>
          </TrayButton>
          <TrayButton aria-label="Updates">
            <Line width="18" height="18" viewBox="0 0 18 18">
              <circle cx="9" cy="9" r="7.500" /><path fill="#111" stroke="none" d="M9 4l4 4h-2v5H7V8H5z" />
            </Line>
          </TrayButton>
          <TrayButton aria-label="Show hidden icons" $space={4}><Caret /></TrayButton>
          <Big>11:35</Big>
          <TrayButton aria-label="Shut down">
            <Line width="18" height="18" viewBox="0 0 18 18">
              <path strokeWidth="1.400" d="M6.500 2a7.500 7.500 0 1 0 5 0" /><path strokeWidth="2" d="M9 0v8" />
            </Line>
          </TrayButton>
          <TrayButton aria-label="Panel menu" $space={4}>
            <Line width="12" height="10" viewBox="0 0 12 10"><path stroke="#2c3338" strokeWidth="1.500" d="M0 1h12M0 5h12M0 9h12" /></Line>
          </TrayButton>
        </Tray>
      </Bar>
    </Desktop>
  );
}
